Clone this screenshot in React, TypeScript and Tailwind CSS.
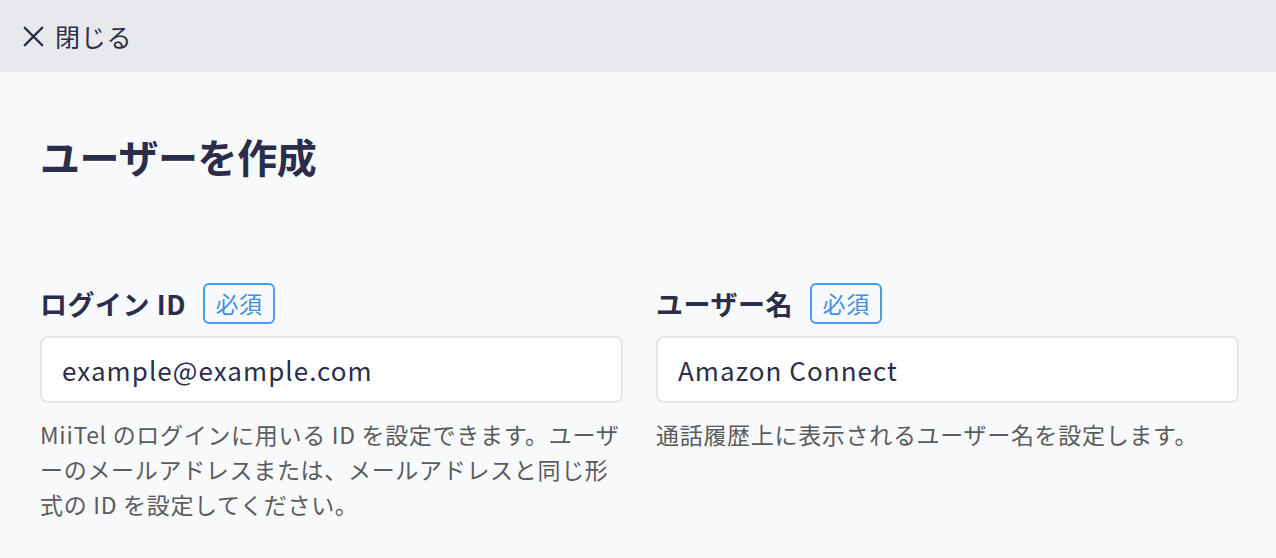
import React from "react";

const font = { fontFamily: '"Noto Sans CJK JP", "Noto Sans", sans-serif' };

function Field({ label, value, help }: { label: string; value: string; help: React.ReactNode }) {
  return (
    <div className="flex flex-col">
      <div className="flex items-center h-[41px]">
        <span className="text-[27px] font-bold tracking-[0.02em] text-[#2b2d4b] leading-none">{label}</span>
        <span className="ml-[17px] h-[41px] w-[72px] flex items-center justify-center rounded-[6px] border-2 border-[#4a9bf0] text-[23px] tracking-[0.03em] text-[#3f8fe9] leading-none">
          必須
        </span>
      </div>
      <div className="mt-[12px] h-[67px] rounded-[8px] border-2 border-[#e4e6eb] bg-white flex items-center px-[20px]">
        <span className="text-[26px] tracking-[0.04em] text-[#2b2d4b] leading-none">{value}</span>
      </div>
      <p className="mt-[14px] text-[23px] leading-[35px] tracking-[0.03em] text-[#5b5b5e] [line-break:anywhere]">{help}</p>
    </div>
  );
}

export default function App() {
  return (
    <div lang="ja" className="w-[1276px] h-[558px] bg-[#f8f9fb] overflow-hidden" style={font}>
      <div className="h-[72px] bg-[#e8e9ed] flex items-center pl-[22px]">
        <svg width="23" height="23" viewBox="0 0 23 23" className="mr-[10px]">
          <path d="M3 3 L20 20 M20 3 L3 20" stroke="#2b2d4b" strokeWidth="2.4" strokeLinecap="square" />
        </svg>
        <span className="text-[25px] tracking-[0.03em] text-[#2b2d4b] leading-none">閉じる</span>
      </div>
      <div className="pl-[40px] pr-[37px]">
        <h1 className="pt-[56px] text-[40px] font-bold tracking-[-0.01em] leading-[56px] text-[#2b2d4b]">ユーザーを作成</h1>
        <div className="mt-[99px] grid grid-cols-2 gap-[33px]">
          <Field
            label="ログイン ID"
            value="example@example.com"
            help={
              <>
                MiiTel のログインに用いる ID を設定できます。ユーザ
                <br />
                ーのメールアドレスまたは、メールアドレスと同じ形式の ID を設定してください。
              </>
            }
          />
          <Field
            label="ユーザー名"
            value="Amazon Connect"
            help="通話履歴上に表示されるユーザー名を設定します。"
          />
        </div>
      </div>
    </div>
  );
}
